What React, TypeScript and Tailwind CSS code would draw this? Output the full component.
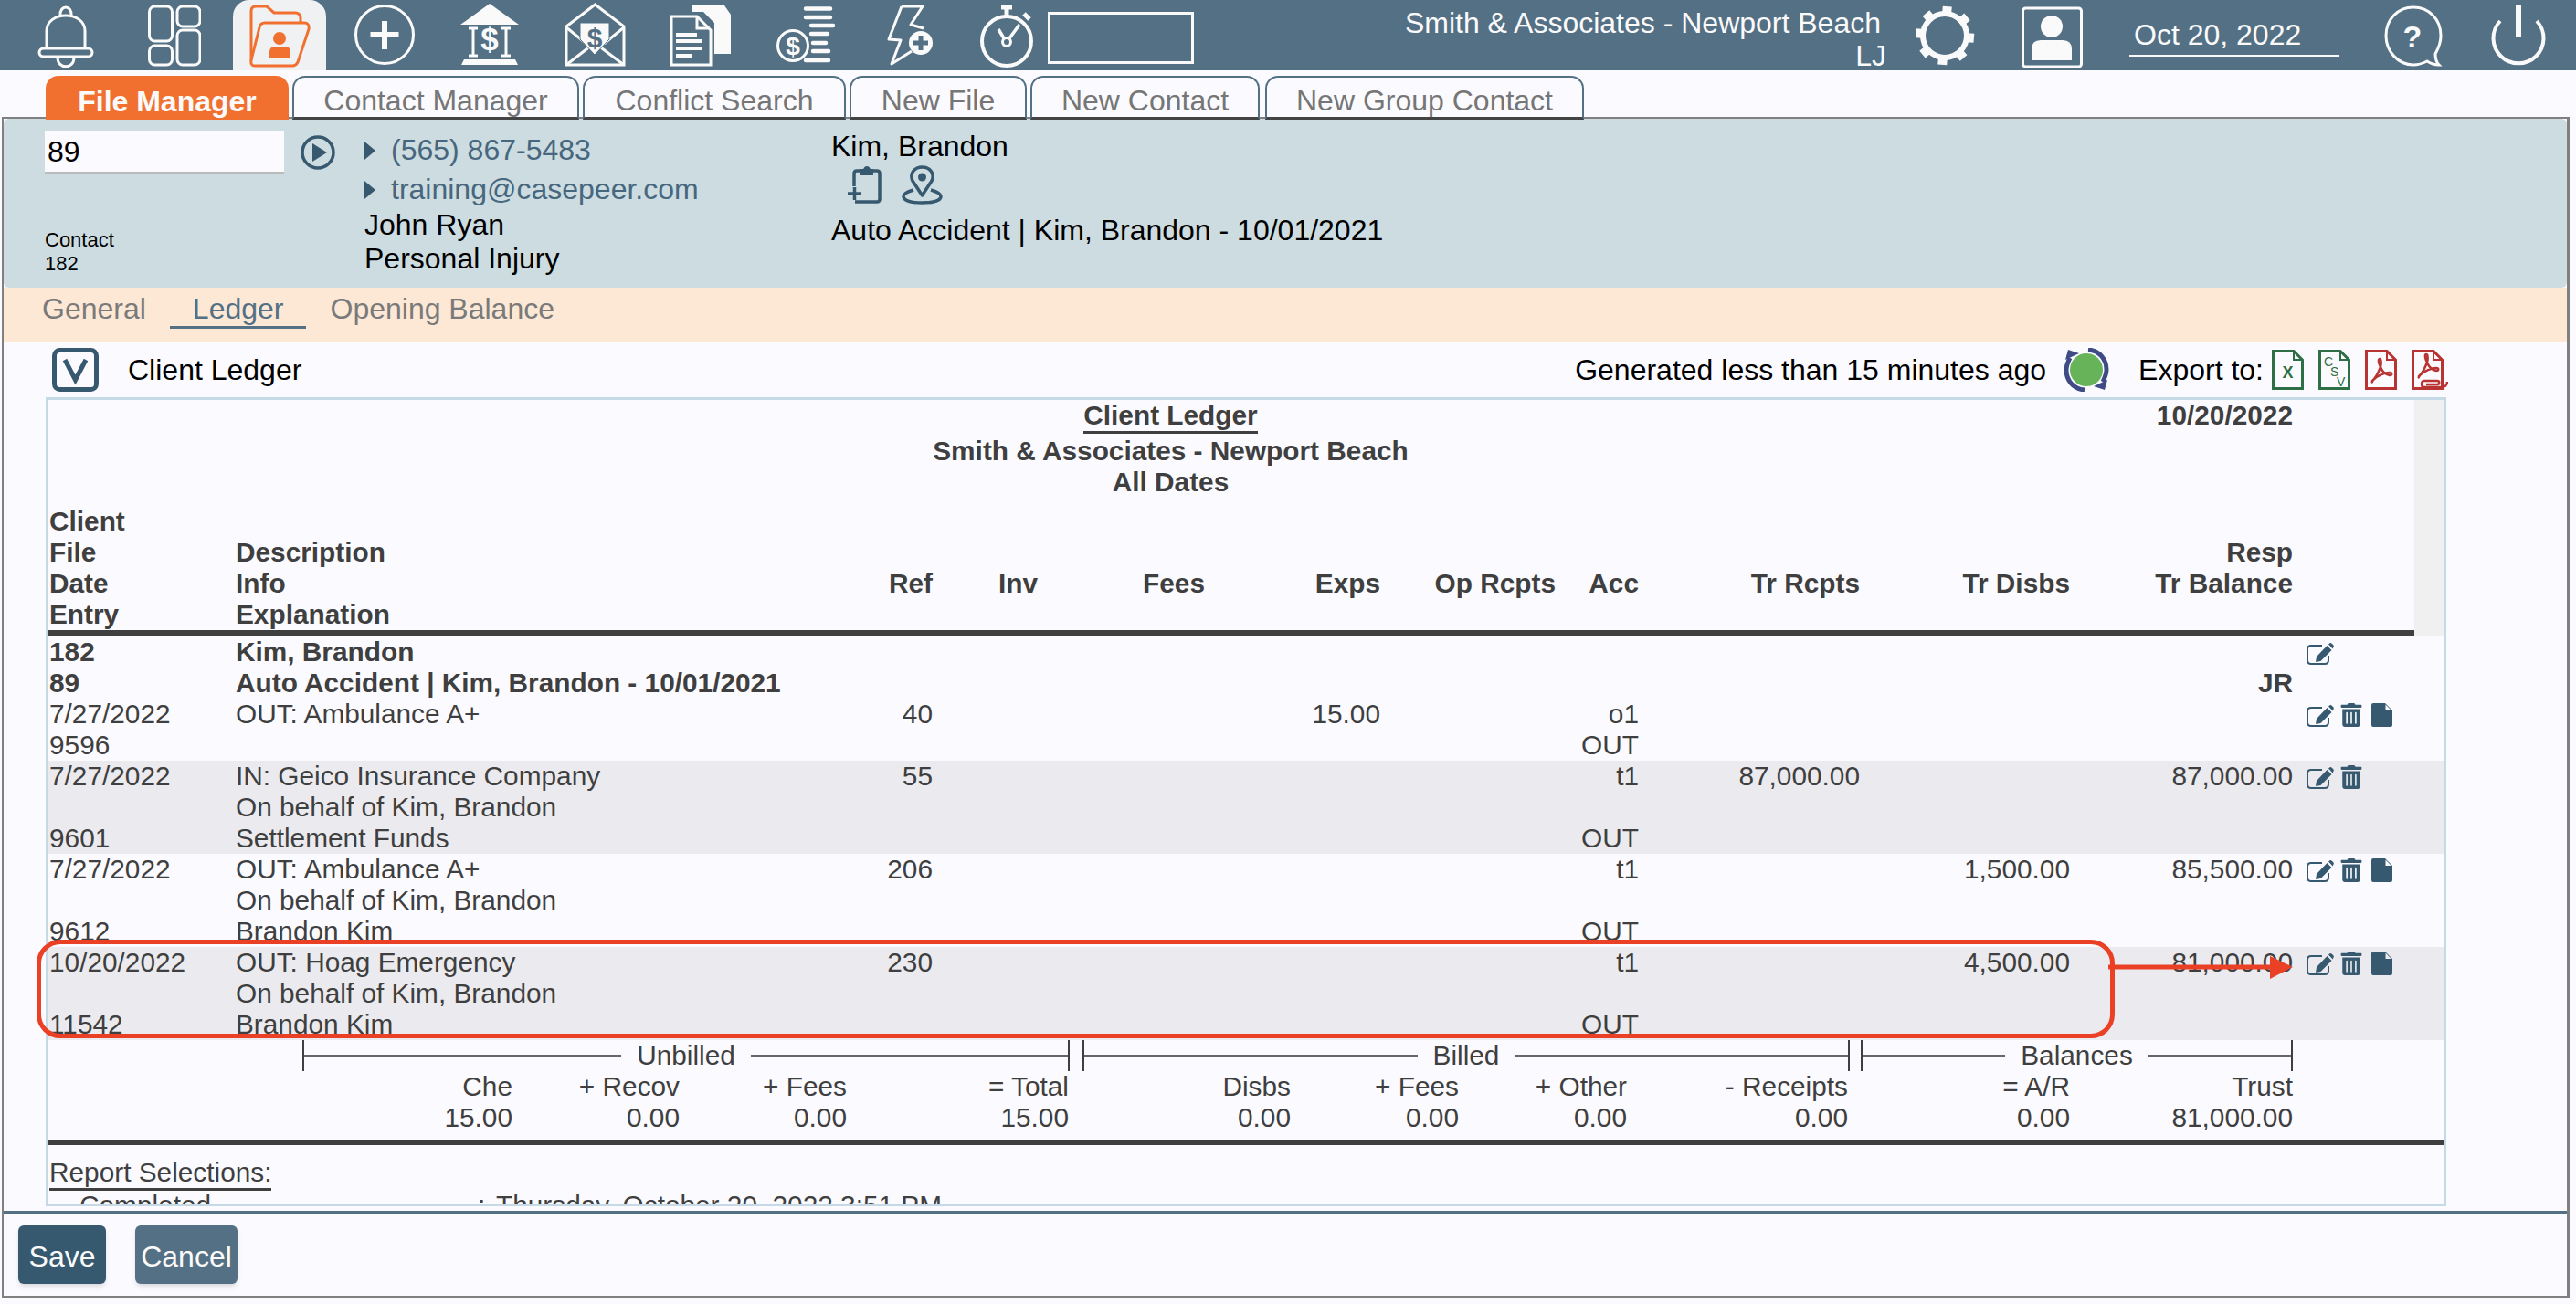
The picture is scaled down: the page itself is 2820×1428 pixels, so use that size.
import { ReactNode } from 'react';
import { FaTrashAlt } from 'react-icons/fa';

const WHITE = '#fafafa';
const NAVY = '#37596f';

function NavSvg({ w, children }: { w: number; children: ReactNode }) {
    return (
        <svg width={w} height={77} viewBox={`0 0 ${w} 77`} fill="none" stroke={WHITE} strokeWidth={3} className="shrink-0">
            {children}
        </svg>
    );
}

function BellIcon() {
    return (
        <NavSvg w={62}>
            <path d="M10 53V34C10 23 20 17 31 17S52 23 52 34V53" />
            <rect x="2" y="53" width="58" height="9" rx="4.5" />
            <path d="M25 17C24 5 38 5 37 17" />
            <path d="M22 63C22 76 40 76 40 63" />
        </NavSvg>
    );
}

function DashIcon() {
    return (
        <NavSvg w={58}>
            <rect x="1.5" y="7" width="25" height="38" rx="6" />
            <rect x="32" y="7" width="25" height="22" rx="6" />
            <rect x="1.5" y="50" width="25" height="21" rx="6" />
            <rect x="32" y="33" width="25" height="38" rx="6" />
        </NavSvg>
    );
}

function FolderIcon() {
    return (
        <svg width={67} height={77} viewBox="0 0 67 77" fill="none" stroke="#f17030" strokeWidth={3} className="shrink-0">
            <path d="M2 66V12Q2 7 7 7H19L27 14H50Q56 14 56 20V25" />
            <path d="M17 25H60Q66 25 65 32L53 68Q51 72 47 72H6Q1 72 2 66L11 30Q12 25 17 25Z" />
            <circle cx="33" cy="42" r="7" fill="#f17030" stroke="none" />
            <path d="M22 63V57Q22 51 28 51H39Q45 51 45 57V63Z" fill="#f17030" stroke="none" />
        </svg>
    );
}

function PlusIcon() {
    return (
        <NavSvg w={66}>
            <circle cx="33" cy="38" r="31.5" />
            <path d="M33 23V54M17.5 38H48.5" strokeWidth={6} />
        </NavSvg>
    );
}

function BankIcon() {
    return (
        <NavSvg w={64}>
            <path d="M0 27L32 4L64 27Z" fill={WHITE} stroke="none" />
            <path d="M9 31H19M14 31V61M9 61H19M45 31H55M50 31V61M45 61H55" />
            <text x="32" y="55" textAnchor="middle" fontSize="35" fontWeight="700" fontFamily="Liberation Sans" fill={WHITE} stroke="none">$</text>
            <path d="M4 65H60L63 71H1Z" fill={WHITE} stroke="none" />
        </NavSvg>
    );
}

function EnvelopeIcon() {
    return (
        <NavSvg w={67}>
            <path d="M2 29L33.5 5L65 29V71H2Z" />
            <path d="M2 30L24 48M65 30L43 48M2 71L33 47L65 71" />
            <path d="M17 25H49V43L33 60L17 43Z" fill={WHITE} stroke="#547085" strokeWidth={1} />
            <text x="33" y="52" textAnchor="middle" fontSize="30" fontWeight="700" fontFamily="Liberation Sans" fill="#547085" stroke="none">$</text>
        </NavSvg>
    );
}

function DocsIcon() {
    return (
        <NavSvg w={67}>
            <path d="M25 6H60L67 16V59H49V25L37 13H25Z" fill={WHITE} stroke="none" />
            <path d="M2 18H30L45 33V71H2Z" />
            <path d="M30 18V31H44" />
            <path d="M7 38H30M7 45H36M7 53H36M7 61H24" strokeWidth={4} />
        </NavSvg>
    );
}

function CoinsIcon() {
    return (
        <NavSvg w={64}>
            <path d="M32 9.5H59M32 19H59M38 28H62M38 37H56M40 47H54M40 56H57M32 66H57" strokeWidth={4.5} strokeLinecap="round" />
            <circle cx="18" cy="50" r="16.5" stroke={WHITE} fill="#547085" />
            <text x="18" y="60" textAnchor="middle" fontSize="28" fontWeight="700" fontFamily="Liberation Sans" fill={WHITE} stroke="none">$</text>
        </NavSvg>
    );
}

function BoltIcon() {
    return (
        <NavSvg w={50}>
            <path d="M16 7H39L26 27L40 31M27 56L5 70L15 44L2 43L16 7" strokeLinejoin="round" />
            <circle cx="37" cy="47" r="13" fill={WHITE} stroke="none" />
            <path d="M37 39V55M29 47H45" stroke="#547085" strokeWidth={5} />
        </NavSvg>
    );
}

function TimerIcon() {
    return (
        <NavSvg w={61}>
            <circle cx="30" cy="45" r="27" strokeWidth={4} />
            <path d="M24 8H36M30 8V17M49 15L55 21" strokeWidth={5} />
            <circle cx="30" cy="46" r="4.5" strokeWidth={3} />
            <path d="M27 42L21 32M33 42L44 27" strokeWidth={3.5} />
        </NavSvg>
    );
}

function GearIcon() {
    const teeth = [5, 50, 95, 140, 185, 230, 275, 320];
    return (
        <NavSvg w={65}>
            <circle cx="32" cy="39" r="24" strokeWidth={6} />
            {teeth.map((a) => (
                <rect key={a} x="27" y="7" width="10" height="10" fill={WHITE} stroke="none" transform={`rotate(${a} 32 39)`} />
            ))}
        </NavSvg>
    );
}

function PersonIcon() {
    return (
        <NavSvg w={67}>
            <rect x="1.5" y="9" width="64" height="64" rx="3" />
            <circle cx="33" cy="29" r="12" fill={WHITE} stroke="none" />
            <path d="M11 66V54Q11 44 21 44H45Q55 44 55 54V66Z" fill={WHITE} stroke="none" />
        </NavSvg>
    );
}

function HelpIcon() {
    return (
        <NavSvg w={64}>
            <path d="M32 8C49 8 62 21 62 39C62 49 58 55 56 59C56 64 57 68 60 71C54 71 50 69 47 67C43 69 38 71 32 71C15 71 2 56 2 39C2 21 15 8 32 8Z" />
            <text x="31" y="52" textAnchor="middle" fontSize="34" fontWeight="700" fontFamily="Liberation Sans" fill={WHITE} stroke="none">?</text>
        </NavSvg>
    );
}

function PowerIcon() {
    return (
        <NavSvg w={60}>
            <path d="M10 23A27.5 27.5 0 1 0 50 23" strokeWidth={4} />
            <path d="M30 6V40" strokeWidth={6} />
        </NavSvg>
    );
}

function PlayCircle() {
    return (
        <svg width={38} height={38} viewBox="0 0 38 38" fill="none" className="shrink-0">
            <circle cx="19" cy="19" r="17" stroke={NAVY} strokeWidth={3.5} />
            <path d="M13 9L29 19L13 29Z" fill={NAVY} />
        </svg>
    );
}

function Caret() {
    return (
        <svg width={12} height={20} viewBox="0 0 12 20" className="shrink-0">
            <path d="M0 0L12 10L0 20Z" fill={NAVY} />
        </svg>
    );
}

function ClipboardIcon() {
    return (
        <svg width={37} height={43} viewBox="0 0 37 43" fill="none" stroke={NAVY} strokeWidth={3.5}>
            <path d="M7 23V9Q7 6 10 6H32Q35 6 35 9V37Q35 40 32 40H8" />
            <path d="M15 10V5H18C19 1 23 1 24 5H27V10Z" fill={NAVY} strokeWidth={2} />
            <path d="M0 31H15M7.5 24V38" />
        </svg>
    );
}

function PinIcon() {
    return (
        <svg width={45} height={43} viewBox="0 0 45 43" fill="none" stroke={NAVY} strokeWidth={3.5}>
            <path d="M22.5 33L12 17C8 8 15 2 22.5 2S37 8 33 17Z" strokeLinejoin="round" />
            <circle cx="22.5" cy="13" r="4.5" fill={NAVY} stroke="none" />
            <path d="M13 27C6 29 2 31 2 34C2 39 12 41 22.5 41S43 39 43 34C43 31 39 29 32 27" />
        </svg>
    );
}

function ToggleIcon() {
    return (
        <svg width={51} height={48} viewBox="0 0 51 48" fill="none" stroke={NAVY} className="shrink-0">
            <rect x="2.5" y="2.5" width="46" height="43" rx="6" strokeWidth={5} />
            <path d="M14 13L25.5 35L37 13" strokeWidth={5} />
        </svg>
    );
}

function SyncIcon() {
    return (
        <svg width={50} height={48} viewBox="0 0 50 48" fill="none" className="shrink-0">
            <circle cx="25" cy="24" r="18" fill="#67b35a" />
            <path d="M27 2C39 3 47 12 47 24C47 29 45 33 43 37" stroke="#3e4b85" strokeWidth={5} />
            <path d="M23 46C11 45 3 36 3 24C3 19 5 15 7 11" stroke="#3e4b85" strokeWidth={5} />
            <path d="M2 13L5 2L17 6Z" fill="#3e4b85" />
            <path d="M48 35L45 46L33 42Z" fill="#3e4b85" />
        </svg>
    );
}

function ExportDoc({ color, w = 35, children }: { color: string; w?: number; children: ReactNode }) {
    return (
        <svg width={w} height={44} viewBox={`0 0 ${w} 44`} fill="none" className="shrink-0">
            <path d="M1.5 1.5H24L33.5 11V42.5H1.5Z" stroke={color} strokeWidth={3} />
            <path d="M24 1.5V11H33.5" stroke={color} strokeWidth={2} />
            {children}
        </svg>
    );
}

function Acrobat({ color }: { color: string }) {
    return (
        <path
            d="M8 34C12 31 15 24 17 19C18 15 18 10 16 10C14 10 15 15 17 19C19 24 22 27 27 28C30 28 30 25 27 25C22 25 14 28 9 33C7 36 8 36 8 34Z"
            stroke={color}
            strokeWidth={2.5}
        />
    );
}

function EditBtn() {
    return (
        <svg width={30} height={24} viewBox="0 0 30 24" fill="none" className="shrink-0">
            <path d="M17 3H5Q1 3 1 7V19Q1 23 5 23H20Q24 23 24 19V14" stroke={NAVY} strokeWidth={2} />
            <path d="M22.5 3L27.5 8L15.5 20L10 21L11 15Z" fill={NAVY} />
            <path d="M24 1.5L25.5 0.3Q26.5 -0.3 27.5 0.5L29.5 2.5Q30.2 3.5 29.5 4.5L28.7 6.5Z" fill={NAVY} />
        </svg>
    );
}

function TrashBtn() {
    return <FaTrashAlt className="w-[24px] h-[26px] ml-[7px] text-[#37596f] shrink-0" />;
}

function FileBtn() {
    return (
        <svg width={23} height={26} viewBox="0 0 23 26" className="ml-[10px] shrink-0">
            <path fillRule="evenodd" d="M2 0H15L23 8V24Q23 26 21 26H2Q0 26 0 24V2Q0 0 2 0ZM15.5 1.5V8H22Z" fill={NAVY} />
        </svg>
    );
}

function Actions({ trash, file }: { trash?: boolean; file?: boolean }) {
    return (
        <div className="flex items-end h-[31px] pl-[15px]">
            <EditBtn />
            {trash && <TrashBtn />}
            {file && <FileBtn />}
        </div>
    );
}

const LINE = 'grid grid-cols-[205px_560px_203px_115px_183px_192px_192px_91px_242px_230px_244px_165px] h-[34px] leading-[34px]';

// left, desc, ref, inv, fees, exps, op rcpts, acc, tr rcpts, tr disbs, balance
type Cells = [string?, string?, string?, string?, string?, string?, string?, string?, string?, string?, string?];

function Line({ cells, bold, actions }: { cells: Cells; bold?: boolean; actions?: ReactNode }) {
    return (
        <div className={bold ? `${LINE} font-bold` : LINE}>
            <div className="pl-[1px] whitespace-nowrap">{cells[0]}</div>
            <div className="whitespace-nowrap">{cells[1]}</div>
            {[2, 3, 4, 5, 6, 7, 8, 9, 10].map((i) => (
                <div key={i} className="text-right whitespace-nowrap">
                    {cells[i]}
                </div>
            ))}
            <div>{actions}</div>
        </div>
    );
}

function Bracket({ label, className }: { label: string; className: string }) {
    return (
        <div className={`flex items-center h-[34px] border-x-2 border-[#3f3f3f] ${className}`}>
            <div className="flex-1 h-[2px] bg-[#666666]" />
            <span className="px-[17px]">{label}</span>
            <div className="flex-1 h-[2px] bg-[#666666]" />
        </div>
    );
}

const SUMMARY = 'grid grid-cols-[508px_183px_183px_243px_243px_184px_184px_242px_243px_244px] h-[34px] leading-[34px] text-right';

const TABS: [string, string][] = [
    ['Contact Manager', 'w-[314px]'],
    ['Conflict Search', 'w-[288px]'],
    ['New File', 'w-[194px]'],
    ['New Contact', 'w-[251px]'],
    ['New Group Contact', 'w-[349px] ml-[2px]'],
];

export default function App() {
    return (
        <div className="relative w-[2820px] h-[1428px] overflow-hidden bg-[#fbfbff] font-['Liberation_Sans',Arial,sans-serif] text-[32px] leading-[37px] text-black">
            <header className="flex h-[77px] bg-[#547085] text-[#fafafa]">
                <div className="ml-[41px]"><BellIcon /></div>
                <div className="ml-[59px]"><DashIcon /></div>
                <div className="ml-[35px] w-[102px] pl-[18px] bg-[#f0f1f3] rounded-t-[18px]"><FolderIcon /></div>
                <div className="ml-[31px]"><PlusIcon /></div>
                <div className="ml-[50px]"><BankIcon /></div>
                <div className="ml-[50px]"><EnvelopeIcon /></div>
                <div className="ml-[48px]"><DocsIcon /></div>
                <div className="ml-[50px]"><CoinsIcon /></div>
                <div className="ml-[57px]"><BoltIcon /></div>
                <div className="ml-[51px]"><TimerIcon /></div>
                <div className="ml-[14px] mt-[13px] w-[160px] h-[57px] border-[3px] border-[#fafafa]" />
                <div className="w-[758px] shrink-0 text-right">
                    <div className="pr-[6px] pt-[7px]">Smith &amp; Associates - Newport Beach</div>
                    <div className="leading-[35px]">LJ</div>
                </div>
                <div className="ml-[32px]"><GearIcon /></div>
                <div className="ml-[51px]"><PersonIcon /></div>
                <div className="ml-[51px] w-[230px] h-[62px] pl-[5px] pt-[20px] border-b-2 border-[#fafafa]">Oct 20, 2022</div>
                <div className="ml-[49px]"><HelpIcon /></div>
                <div className="ml-[53px]"><PowerIcon /></div>
            </header>

            <nav className="relative z-10 flex gap-[4px] h-[48px] mt-[6px] pl-[50px]">
                <div className="w-[266px] bg-[#f17030] text-[#fafafa] font-bold text-center leading-[56px] rounded-t-[14px]">File Manager</div>
                {TABS.map(([label, width]) => (
                    <div
                        key={label}
                        className={`${width} text-center leading-[50px] text-[#767676] border-2 border-b-[3px] border-[#547085] border-b-[#444444] rounded-t-[14px] bg-[#fbfbff]`}
                    >
                        {label}
                    </div>
                ))}
            </nav>

            <main className="ml-[2px] -mt-[3px] w-[2811px] h-[1293px] border-2 border-[#808080] border-r-[3px] overflow-hidden">
                <section className="flex h-[185px] bg-[#cddce0] rounded-[6px]">
                    <div className="w-[262px] ml-[45px] pt-[13px] shrink-0">
                        <div className="h-[47px] pl-[3px] leading-[46px] bg-[#fbfaff] border-b-2 border-[#bbbbbb]">89</div>
                        <div className="mt-[60px] text-[22px] leading-[26px]">
                            <div>Contact</div>
                            <div>182</div>
                        </div>
                    </div>
                    <div className="ml-[18px] pt-[18px] shrink-0"><PlayCircle /></div>
                    <div className="ml-[32px] w-[511px] pt-[16px] shrink-0">
                        <div className="flex items-center gap-[17px] text-[#47677e]"><Caret />(565) 867-5483</div>
                        <div className="flex items-center gap-[17px] mt-[6px] text-[#47677e]"><Caret />training@casepeer.com</div>
                        <div className="mt-[2px]">John Ryan</div>
                        <div>Personal Injury</div>
                    </div>
                    <div className="pt-[12px]">
                        <div>Kim, Brandon</div>
                        <div className="flex gap-[22px] mt-[2px] ml-[18px]">
                            <ClipboardIcon />
                            <PinIcon />
                        </div>
                        <div className="mt-[10px]">Auto Accident | Kim, Brandon - 10/01/2021</div>
                    </div>
                </section>

                <div className="flex gap-[1px] h-[60px] pl-[17px] bg-[#fde8d6] text-[#7a7a7a]">
                    <div className="h-[45px] px-[25px] pt-[5px]">General</div>
                    <div className="h-[45px] px-[25px] pt-[5px] text-[#547085] border-b-[3px] border-[#547085]">Ledger</div>
                    <div className="h-[45px] px-[25px] pt-[5px]">Opening Balance</div>
                </div>

                <div className="flex items-center h-[60px] pl-[53px] pr-[130px]">
                    <ToggleIcon />
                    <span className="ml-[32px]">Client Ledger</span>
                    <span className="ml-auto">Generated less than 15 minutes ago</span>
                    <span className="ml-[19px]"><SyncIcon /></span>
                    <span className="ml-[32px] mr-[9px]">Export to:</span>
                    <ExportDoc color="#2f6f45">
                        <text x="17.5" y="31" textAnchor="middle" fontSize="18" fontWeight="700" fontFamily="Liberation Sans" fill="#2f6f45">X</text>
                    </ExportDoc>
                    <span className="ml-[16px]">
                        <ExportDoc color="#2f6f45">
                            <text x="6" y="18" fontSize="14" fontFamily="Liberation Sans" fill="#2f6f45">C</text>
                            <text x="13" y="29" fontSize="14" fontFamily="Liberation Sans" fill="#2f6f45">S</text>
                            <text x="20" y="40" fontSize="14" fontFamily="Liberation Sans" fill="#2f6f45">V</text>
                        </ExportDoc>
                    </span>
                    <span className="ml-[16px]">
                        <ExportDoc color="#b93333">
                            <Acrobat color="#b93333" />
                        </ExportDoc>
                    </span>
                    <span className="ml-[16px]">
                        <ExportDoc color="#b93333" w={40}>
                            <g transform="translate(0 -5)"><Acrobat color="#b93333" /></g>
                            <path d="M39 35C39 39 36 41 33 41H14C10 41 10 34 14 34H28C31 34 31 38 28 38H16" stroke="#b93333" strokeWidth={2.5} />
                        </ExportDoc>
                    </span>
                </div>

                <div className="ml-[46px] w-[2628px] h-[886px] border-[3px] border-[#c5dae6] overflow-hidden text-[29.8px] leading-[34px] text-[#3f3f3f]">
                    <div className="flex h-[259px]">
                        <div className="w-[2590px] shrink-0">
                            <div className="grid grid-cols-[1fr_auto_1fr] w-[2457px] h-[116px] font-bold text-center">
                                <div />
                                <div>
                                    <div className="w-[191px] mx-auto border-b-[3px] border-[#3f3f3f] whitespace-nowrap">Client Ledger</div>
                                    <div className="mt-[2px]">Smith &amp; Associates - Newport Beach</div>
                                    <div>All Dates</div>
                                </div>
                                <div className="text-right">10/20/2022</div>
                            </div>
                            <div className="font-bold">
                                <Line bold cells={['Client']} />
                                <Line bold cells={['File', 'Description', , , , , , , , , 'Resp']} />
                                <Line bold cells={['Date', 'Info', 'Ref', 'Inv', 'Fees', 'Exps', 'Op Rcpts', 'Acc', 'Tr Rcpts', 'Tr Disbs', 'Tr Balance']} />
                                <Line bold cells={['Entry', 'Explanation']} />
                            </div>
                            <div className="h-[7px] bg-[#3f3f3f]" />
                        </div>
                        <div className="flex-1 bg-[#f0f0f0]" />
                    </div>

                    <div>
                        <Line bold cells={['182', 'Kim, Brandon']} actions={<Actions />} />
                        <Line bold cells={['89', 'Auto Accident | Kim, Brandon - 10/01/2021', , , , , , , , , 'JR']} />
                        <Line cells={['7/27/2022', 'OUT: Ambulance A+', '40', , , '15.00', , 'o1']} actions={<Actions trash file />} />
                        <Line cells={['9596', , , , , , , 'OUT']} />
                    </div>
                    <div className="bg-[#ebebef]">
                        <Line cells={['7/27/2022', 'IN: Geico Insurance Company', '55', , , , , 't1', '87,000.00', , '87,000.00']} actions={<Actions trash />} />
                        <Line cells={[, 'On behalf of Kim, Brandon']} />
                        <Line cells={['9601', 'Settlement Funds', , , , , , 'OUT']} />
                    </div>
                    <div>
                        <Line cells={['7/27/2022', 'OUT: Ambulance A+', '206', , , , , 't1', , '1,500.00', '85,500.00']} actions={<Actions trash file />} />
                        <Line cells={[, 'On behalf of Kim, Brandon']} />
                        <Line cells={['9612', 'Brandon Kim', , , , , , 'OUT']} />
                    </div>
                    <div className="bg-[#ebebef]">
                        <Line cells={['10/20/2022', 'OUT: Hoag Emergency', '230', , , , , 't1', , '4,500.00', '81,000.00']} actions={<Actions trash file />} />
                        <Line cells={[, 'On behalf of Kim, Brandon']} />
                        <Line cells={['11542', 'Brandon Kim', , , , , , 'OUT']} />
                    </div>

                    <div className="flex pl-[278px]">
                        <Bracket label="Unbilled" className="w-[840px]" />
                        <Bracket label="Billed" className="w-[840px] ml-[14px]" />
                        <Bracket label="Balances" className="w-[473px] ml-[12px]" />
                    </div>
                    <div className={SUMMARY}>
                        <div>Che</div><div>+ Recov</div><div>+ Fees</div><div>= Total</div><div>Disbs</div><div>+ Fees</div><div>+ Other</div><div>- Receipts</div><div>= A/R</div><div>Trust</div>
                    </div>
                    <div className={SUMMARY}>
                        <div>15.00</div><div>0.00</div><div>0.00</div><div>15.00</div><div>0.00</div><div>0.00</div><div>0.00</div><div>0.00</div><div>0.00</div><div>81,000.00</div>
                    </div>
                    <div className="h-[6px] mt-[7px] bg-[#3f3f3f]" />
                    <div className="mt-[13px] ml-[1px] w-fit border-b-[3px] border-[#3f3f3f]">Report Selections:</div>
                    <div className="flex -mt-[1px]">
                        <span className="ml-[34px] w-[436px]">Completed</span>
                        <span className="w-[20px]">:</span>
                        <span>Thursday, October 20, 2022 3:51 PM</span>
                    </div>
                </div>

                <footer className="mt-[5px] border-t-[3px] border-[#547085] pl-[16px] pt-[13px] flex gap-[32px] text-[#fafafa] leading-[68px] text-center">
                    <div className="w-[96px] h-[64px] bg-[#37596f] rounded-[6px] shadow-md">Save</div>
                    <div className="w-[112px] h-[64px] bg-[#547085] rounded-[6px] shadow-md">Cancel</div>
                </footer>
            </main>

            <div className="absolute left-[40px] top-[1029px] w-[2275px] h-[108px] border-[5px] border-[#ea4126] rounded-[26px]" />
            <svg width={204} height={30} viewBox="0 0 204 30" className="absolute left-[2308px] top-[1045px]">
                <path d="M0 14H180" stroke="#ea4126" strokeWidth={5} />
                <path d="M177 2L202 14L177 27Z" fill="#ea4126" />
            </svg>
        </div>
    );
}
